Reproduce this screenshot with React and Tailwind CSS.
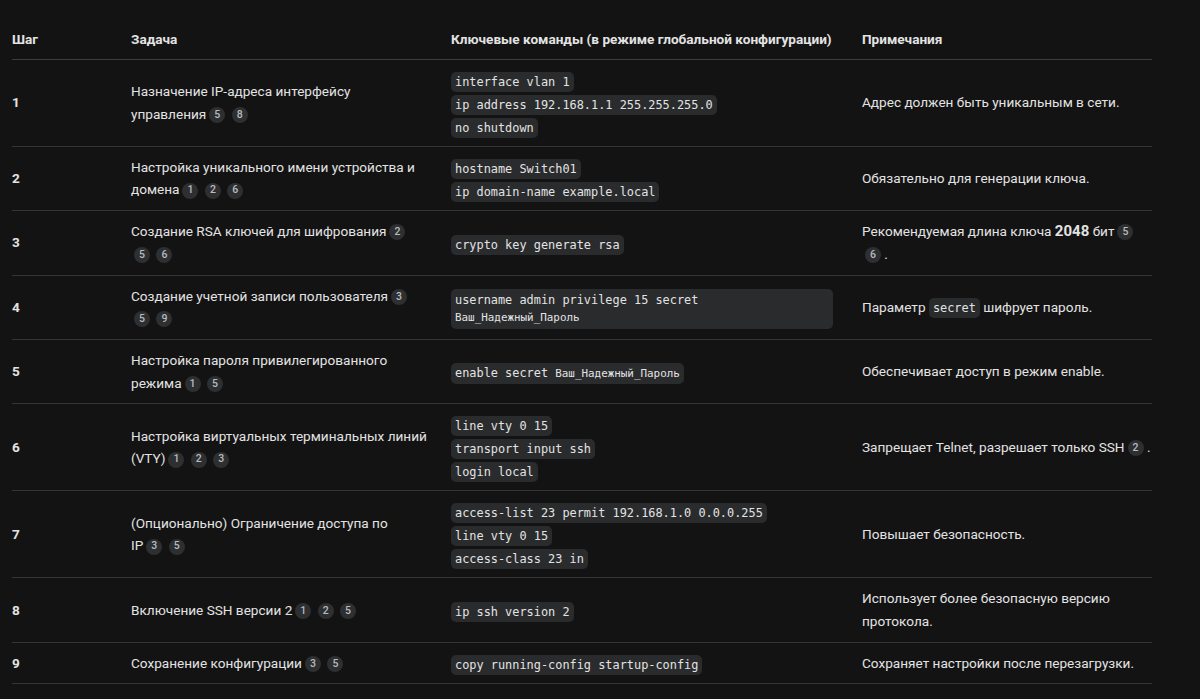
function Cite({ n }) {
  return (
    <span className="my-[-3px] ml-[3px] inline-flex h-[16px] w-[16px] items-center justify-center rounded-full bg-[#2e2f31] align-[1px] text-[10.5px] font-medium leading-none text-[#b8bbbf]">
      {n}
    </span>
  );
}

function Code({ children }) {
  return (
    <code className="inline-block rounded-[5px] bg-[#2a2b2d] px-[4px] py-[2px] align-middle font-['DejaVu_Sans_Mono',monospace] text-[11.9px] leading-[16px] text-[#e3e3e3]">
      {children}
    </code>
  );
}

const Ru = ({ children }) => <span className="text-[10.9px] font-medium">{children}</span>;

// keeps a group of markers (or a word and its marker) on one line
const Nw = ({ children }) => <span className="whitespace-nowrap">{children}</span>;

const rows = [
  {
    task: <>Назначение IP-адреса интерфейсу <Nw>управления<Cite n="5" /></Nw> <Cite n="8" /></>,
    cmds: ['interface vlan 1', 'ip address 192.168.1.1 255.255.255.0', 'no shutdown'],
    note: 'Адрес должен быть уникальным в сети.',
  },
  {
    task: <>Настройка уникального имени устройства и домена<Cite n="1" /> <Cite n="2" /> <Cite n="6" /></>,
    cmds: ['hostname Switch01', 'ip domain-name example.local'],
    note: 'Обязательно для генерации ключа.',
  },
  {
    task: <>Создание RSA ключей для шифрования<Cite n="2" /> <Nw><Cite n="5" /> <Cite n="6" /></Nw></>,
    cmds: ['crypto key generate rsa'],
    note: <>Рекомендуемая длина ключа <b className="text-[15px] font-bold leading-none">2048</b> бит<Cite n="5" /> <Nw><Cite n="6" /> .</Nw></>,
  },
  {
    task: <>Создание учетной записи пользователя<Cite n="3" /> <Nw><Cite n="5" /> <Cite n="9" /></Nw></>,
    block: true,
    note: <>Параметр <Code>secret</Code> шифрует пароль.</>,
  },
  {
    task: <>Настройка пароля привилегированного режима<Cite n="1" /> <Cite n="5" /></>,
    cmds: [<>enable secret <Ru>Ваш_Надежный_Пароль</Ru></>],
    note: 'Обеспечивает доступ в режим enable.',
  },
  {
    task: <>Настройка виртуальных терминальных линий (VTY)<Cite n="1" /> <Cite n="2" /> <Cite n="3" /></>,
    cmds: ['line vty 0 15', 'transport input ssh', 'login local'],
    note: <>Запрещает Telnet, разрешает только SSH<Nw><Cite n="2" /> .</Nw></>,
  },
  {
    task: <>(Опционально) Ограничение доступа по <Nw>IP<Cite n="3" /> <Cite n="5" /></Nw></>,
    cmds: ['access-list 23 permit 192.168.1.0 0.0.0.255', 'line vty 0 15', 'access-class 23 in'],
    note: 'Повышает безопасность.',
  },
  {
    task: <>Включение SSH версии 2<Cite n="1" /> <Cite n="2" /> <Cite n="5" /></>,
    cmds: ['ip ssh version 2'],
    note: 'Использует более безопасную версию протокола.',
  },
  {
    task: <>Сохранение конфигурации<Cite n="3" /> <Cite n="5" /></>,
    cmds: ['copy running-config startup-config'],
    note: 'Сохраняет настройки после перезагрузки.',
  },
];

export default function App() {
  return (
    <div className="min-h-[699px] bg-[#131314] pl-[12px] pt-[19px] font-['Roboto',sans-serif] text-[13.6px] leading-[22.7px] text-[#e3e3e3]">
      <table className="w-[1140px] table-fixed border-collapse text-left">
        <colgroup>
          <col className="w-[119px]" />
          <col className="w-[320px]" />
          <col className="w-[411px]" />
          <col className="w-[290px]" />
        </colgroup>
        <thead>
          <tr className="border-b border-[#3c3d3f]">
            <th className="pb-[8px] pt-[9px] font-bold">Шаг</th>
            <th className="pb-[8px] pt-[9px] font-bold">Задача</th>
            <th className="pb-[8px] pt-[9px] font-bold">Ключевые команды (в режиме глобальной конфигурации)</th>
            <th className="pb-[8px] pt-[9px] font-bold">Примечания</th>
          </tr>
        </thead>
        <tbody>
          {rows.map((row, i) => (
            <tr key={i} className="border-b border-[#333436]">
              <td className="py-[9px] font-bold">{i + 1}</td>
              <td className="py-[9px] pr-[22px]">{row.task}</td>
              <td className="pb-[8px] pr-[29px] pt-[12px]">
                {row.block ? (
                  <code className="block rounded-[5px] bg-[#2a2b2d] px-[4px] py-[3px] font-['DejaVu_Sans_Mono',monospace] text-[11.9px] leading-[17px] text-[#e3e3e3]">
                    username admin privilege 15 secret <Ru>Ваш_Надежный_Пароль</Ru>
                  </code>
                ) : (
                  <div className="flex flex-col items-start gap-[3px]">
                    {row.cmds.map((c, j) => (
                      <Code key={j}>{c}</Code>
                    ))}
                  </div>
                )}
              </td>
              <td className="py-[9px]">{row.note}</td>
            </tr>
          ))}
        </tbody>
      </table>
    </div>
  );
}
